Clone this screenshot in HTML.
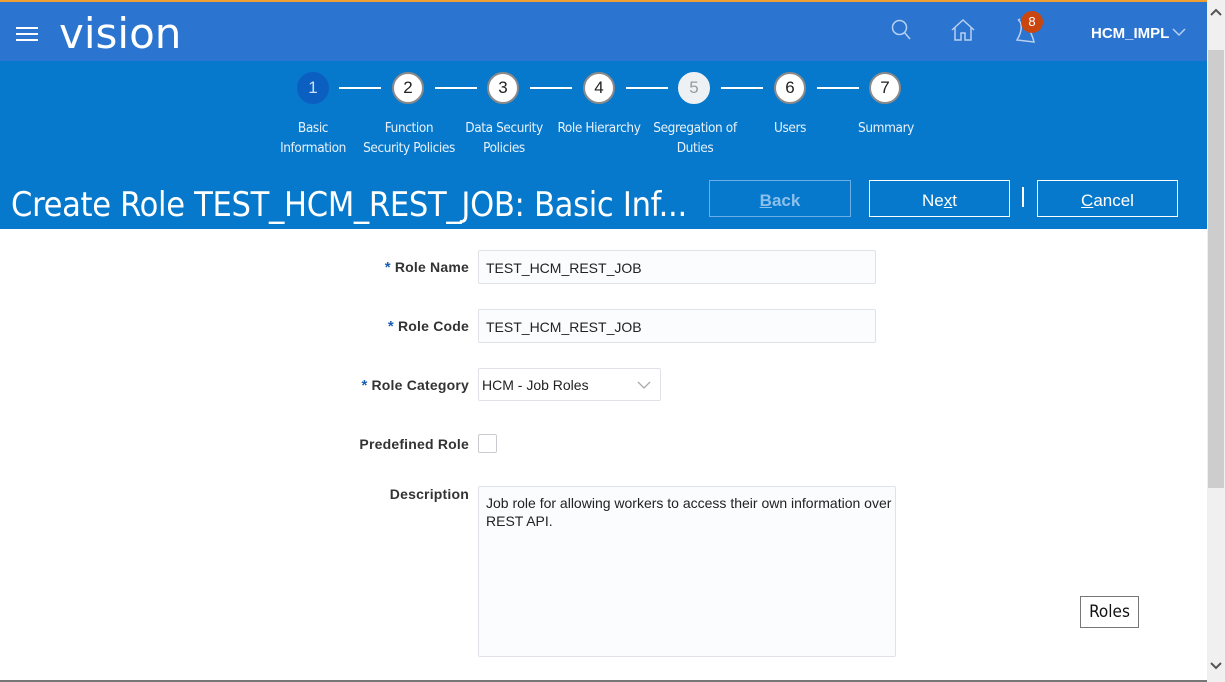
<!DOCTYPE html>
<html><head><style>
*{box-sizing:border-box;margin:0;padding:0}
body{width:1225px;height:682px;overflow:hidden;background:#fff;font-family:"Liberation Sans",sans-serif;position:relative}
.top{position:absolute;left:0;top:0;width:1207px;height:61px;background:#2b74d0;border-top:2px solid #f0a030}
.band{position:absolute;left:0;top:61px;width:1207px;height:168px;background:#0679cc}
.abs{position:absolute}
.step{position:absolute;top:72px;width:32px;height:32px;border-radius:50%;background:#fff;border:2px solid #8a8a8a;color:#222;font-size:17px;text-align:center;line-height:28px}
.line{position:absolute;top:87px;height:2px;width:42px;background:#fff}
.lbl{position:absolute;top:118px;width:100px;text-align:center;color:#e8f1fb;font-size:13.5px;line-height:20px;font-family:"DejaVu Sans Condensed","Liberation Sans Narrow",sans-serif;letter-spacing:-0.4px}
.btn{position:absolute;top:180px;height:37px;border:1px solid #fff;color:#fff;font-size:17px;text-align:center;line-height:39px}
.lab{position:absolute;right:756px;font-size:14px;font-weight:bold;color:#333;text-align:right;letter-spacing:0.2px}
.lab b{color:#1a5fb4;font-size:15px;margin-right:4px}
.inp{position:absolute;left:478px;background:#fbfcfd;border:1px solid #dfe3e8;border-radius:2px;font-size:14px;color:#222;padding-left:7px}
</style></head><body>
<div class="top"></div>
<div class="abs" style="left:16px;top:27px;width:22px;height:2px;background:#fff;box-shadow:0 6px 0 #fff,0 12px 0 #fff"></div>
<div class="abs" style="left:59px;top:9px;color:#fff;font-size:42px;font-family:'DejaVu Sans',sans-serif;letter-spacing:0px">vision</div>
<svg class="abs" style="left:890px;top:18px" width="24" height="24" viewBox="0 0 24 24" fill="none" stroke="#b8d0f0" stroke-width="1.5"><circle cx="9.5" cy="9.5" r="7"/><path d="M14.5 14.5L20 21"/></svg>
<svg class="abs" style="left:950px;top:18px" width="26" height="24" viewBox="0 0 26 24" fill="none" stroke="#b8d0f0" stroke-width="1.5"><path d="M2 12L13 2L24 12M5 9V22H11V15H15V22H21V9"/></svg>
<svg class="abs" style="left:1014px;top:16px" width="26" height="28" viewBox="0 0 26 28" fill="none" stroke="#b8d0f0" stroke-width="1.5"><path d="M4 4C8 6 9 14 3 24L20 26C18 18 14 10 8 6M4 4L6 3"/></svg>
<div class="abs" style="left:1021px;top:11px;width:22px;height:22px;border-radius:50%;background:#c9460f;color:#fff;font-size:13px;text-align:center;line-height:22px">8</div>
<div class="abs" style="left:1091px;top:25px;color:#fff;font-size:15px;font-weight:bold">HCM_IMPL</div>
<svg class="abs" style="left:1172px;top:28px" width="14" height="9"><path d="M1 1L7 7L13 1" fill="none" stroke="#b8d0f0" stroke-width="1.5"/></svg>
<div class="band"></div>
<div class="step" style="left:297px;background:#0b5fc0;border-color:#0b5fc0;color:#cfe0f5">1</div>
<div class="line" style="left:339px"></div>
<div class="step" style="left:392px">2</div>
<div class="line" style="left:435px"></div>
<div class="step" style="left:487px">3</div>
<div class="line" style="left:530px"></div>
<div class="step" style="left:583px">4</div>
<div class="line" style="left:626px"></div>
<div class="step" style="left:678px;background:#eef1f4;border-color:#eef1f4;color:#999">5</div>
<div class="line" style="left:721px"></div>
<div class="step" style="left:774px">6</div>
<div class="line" style="left:817px"></div>
<div class="step" style="left:869px">7</div>
<div class="lbl" style="left:263px">Basic<br>Information</div>
<div class="lbl" style="left:359px">Function<br>Security Policies</div>
<div class="lbl" style="left:454px">Data Security<br>Policies</div>
<div class="lbl" style="left:549px">Role Hierarchy</div>
<div class="lbl" style="left:645px">Segregation of<br>Duties</div>
<div class="lbl" style="left:740px">Users</div>
<div class="lbl" style="left:836px">Summary</div>
<div class="abs" style="left:11px;top:185px;color:#fff;font-size:34px;font-family:'DejaVu Sans Condensed',sans-serif;font-weight:300;letter-spacing:-0.3px">Create Role TEST_HCM_REST_JOB: Basic Inf...</div>
<div class="btn" style="left:709px;width:142px;border-color:#6aaee8;color:#8cc0ec;font-weight:bold"><u>B</u>ack</div>
<div class="btn" style="left:869px;width:141px">Ne<u>x</u>t</div>
<div class="abs" style="left:1022px;top:187px;width:2px;height:20px;background:#fff"></div>
<div class="btn" style="left:1037px;width:141px"><u>C</u>ancel</div>

<div class="lab" style="top:259px"><b>*</b>Role Name</div>
<div class="inp" style="top:250px;width:398px;height:34px;line-height:34px">TEST_HCM_REST_JOB</div>
<div class="lab" style="top:318px"><b>*</b>Role Code</div>
<div class="inp" style="top:309px;width:398px;height:34px;line-height:34px">TEST_HCM_REST_JOB</div>
<div class="lab" style="top:377px"><b>*</b>Role Category</div>
<div class="inp" style="top:368px;width:183px;height:33px;line-height:33px;padding-left:3px;background:#fff">HCM - Job Roles</div>
<svg class="abs" style="left:637px;top:381px" width="14" height="9"><path d="M1 1L7 7L13 1" fill="none" stroke="#aaa" stroke-width="1.3"/></svg>
<div class="lab" style="top:436px">Predefined Role</div>
<div class="abs" style="left:478px;top:434px;width:19px;height:19px;border:1px solid #c8ccd0;border-radius:2px"></div>
<div class="lab" style="top:486px">Description</div>
<div class="inp" style="top:486px;width:418px;height:171px;padding:7px 0 0 7px;line-height:18px">Job role for allowing workers to access their own information over REST API.</div>
<div class="abs" style="left:1080px;top:596px;width:59px;height:32px;border:1px solid #777;font-size:17px;text-align:center;line-height:30px;font-family:'DejaVu Sans Condensed',sans-serif;color:#111">Roles</div>

<div class="abs" style="left:1207px;top:0;width:18px;height:682px;background:#f0f0f0"></div>
<div class="abs" style="left:1208px;top:50px;width:16px;height:438px;background:#cdcdcd"></div>
<svg class="abs" style="left:1210px;top:8px" width="12" height="8"><path d="M1 7L6 2L11 7" fill="none" stroke="#555" stroke-width="2"/></svg>
<svg class="abs" style="left:1210px;top:662px" width="12" height="8"><path d="M1 1L6 6L11 1" fill="none" stroke="#555" stroke-width="2"/></svg>
<div class="abs" style="left:0;top:680px;width:1207px;height:2px;background:#777"></div>
</body></html>
